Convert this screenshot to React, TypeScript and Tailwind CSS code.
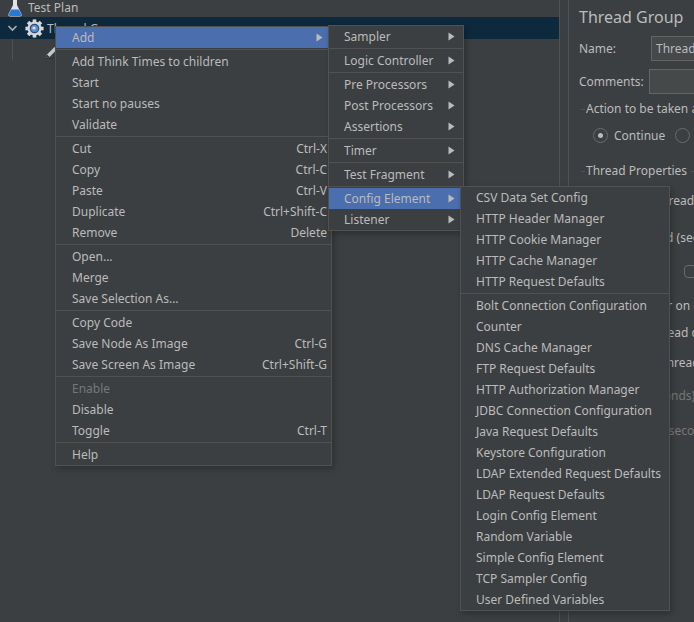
import React from 'react';

type MenuItem = { label: string; shortcut?: string; arrow?: boolean; active?: boolean; disabled?: boolean };

const mainMenu: MenuItem[][] = [
  [{ label: 'Add', arrow: true, active: true }],
  [
    { label: 'Add Think Times to children' },
    { label: 'Start' },
    { label: 'Start no pauses' },
    { label: 'Validate' },
  ],
  [
    { label: 'Cut', shortcut: 'Ctrl-X' },
    { label: 'Copy', shortcut: 'Ctrl-C' },
    { label: 'Paste', shortcut: 'Ctrl-V' },
    { label: 'Duplicate', shortcut: 'Ctrl+Shift-C' },
    { label: 'Remove', shortcut: 'Delete' },
  ],
  [{ label: 'Open...' }, { label: 'Merge' }, { label: 'Save Selection As...' }],
  [
    { label: 'Copy Code' },
    { label: 'Save Node As Image', shortcut: 'Ctrl-G' },
    { label: 'Save Screen As Image', shortcut: 'Ctrl+Shift-G' },
  ],
  [{ label: 'Enable', disabled: true }, { label: 'Disable' }, { label: 'Toggle', shortcut: 'Ctrl-T' }],
  [{ label: 'Help' }],
];

const addMenu: MenuItem[][] = [
  [{ label: 'Sampler', arrow: true }],
  [{ label: 'Logic Controller', arrow: true }],
  [
    { label: 'Pre Processors', arrow: true },
    { label: 'Post Processors', arrow: true },
    { label: 'Assertions', arrow: true },
  ],
  [{ label: 'Timer', arrow: true }],
  [{ label: 'Test Fragment', arrow: true }],
  [
    { label: 'Config Element', arrow: true, active: true },
    { label: 'Listener', arrow: true },
  ],
];

const configMenu: MenuItem[][] = [
  [
    { label: 'CSV Data Set Config' },
    { label: 'HTTP Header Manager' },
    { label: 'HTTP Cookie Manager' },
    { label: 'HTTP Cache Manager' },
    { label: 'HTTP Request Defaults' },
  ],
  [
    { label: 'Bolt Connection Configuration' },
    { label: 'Counter' },
    { label: 'DNS Cache Manager' },
    { label: 'FTP Request Defaults' },
    { label: 'HTTP Authorization Manager' },
    { label: 'JDBC Connection Configuration' },
    { label: 'Java Request Defaults' },
    { label: 'Keystore Configuration' },
    { label: 'LDAP Extended Request Defaults' },
    { label: 'LDAP Request Defaults' },
    { label: 'Login Config Element' },
    { label: 'Random Variable' },
    { label: 'Simple Config Element' },
    { label: 'TCP Sampler Config' },
    { label: 'User Defined Variables' },
  ],
];

function Menu({ groups, className, itemPad }: { groups: MenuItem[][]; className: string; itemPad: string }) {
  return (
    <div className={`absolute border border-[#515151] bg-[#3c3f41] shadow-[2px_3px_6px_rgba(0,0,0,0.25)] ${className}`}>
      {groups.map((group, i) => (
        <div key={i}>
          {i > 0 && <div className="my-px h-px bg-[#515151]" />}
          {group.map((item) => (
            <div
              key={item.label}
              className={`flex h-[21px] items-center pr-1 ${itemPad} ${item.active ? 'bg-[#4b6eaf]' : ''} ${item.disabled ? 'text-[#777777]' : 'text-[#bbbbbb]'}`}
            >
              <span className="flex-1 whitespace-nowrap">{item.label}</span>
              {item.shortcut && <span className="whitespace-nowrap">{item.shortcut}</span>}
              {item.arrow && (
                <svg width="7" height="9" viewBox="0 0 7 9" className="mr-1">
                  <path d="M0.5 0.5 L6.5 4.5 L0.5 8.5 Z" fill="#bbbbbb" />
                </svg>
              )}
            </div>
          ))}
        </div>
      ))}
    </div>
  );
}

function Flask() {
  return (
    <svg width="14" height="17" viewBox="0 0 14 17" className="shrink-0">
      <path d="M5 0 H9 V5 L13.5 14 Q14.2 16.5 12 16.5 H2 Q-0.2 16.5 0.5 14 L5 5 Z" fill="#dfe3e8" />
      <path d="M3.2 9.5 H10.8 L13.2 14.2 Q13.7 16 12 16 H2 Q0.3 16 0.8 14.2 Z" fill="#2a78d6" />
    </svg>
  );
}

function Gear() {
  return (
    <svg width="19" height="19" viewBox="0 0 19 19" className="shrink-0">
      <g fill="#d6d8da">
        <circle cx="9.5" cy="9.5" r="7" />
        {[0, 45, 90, 135, 180, 225, 270, 315].map((a) => (
          <rect key={a} x="7.7" y="0.4" width="3.6" height="4" transform={`rotate(${a} 9.5 9.5)`} />
        ))}
      </g>
      <circle cx="9.5" cy="9.5" r="4.8" fill="#2d4f80" />
      <circle cx="9.5" cy="9.5" r="3.6" fill="#5d8fd0" />
      <circle cx="9" cy="9" r="1.6" fill="#cfe0f4" />
    </svg>
  );
}

function Pencil() {
  return (
    <svg width="14" height="14" viewBox="0 0 14 14">
      <path d="M1 13 L2 9.5 L9.5 2 L12 4.5 L4.5 12 Z" fill="#c9c9c9" />
      <path d="M1 13 L2 9.5 L4.5 12 Z" fill="#2b2b2b" />
      <path d="M1 13.5 H8" stroke="#2f3132" strokeWidth="1" />
    </svg>
  );
}

export default function App() {
  return (
    <div className="relative flex h-[622px] w-[694px] overflow-hidden bg-[#3c3f41] font-['Noto_Sans',sans-serif] text-[12px] leading-none text-[#bbbbbb]">
      {/* Tree */}
      <div className="w-[560px] shrink-0 border-r border-[#515151]">
        <div className="flex h-[17px] items-center gap-[6px] pl-[8px]">
          <Flask />
          <span className="pb-px">Test Plan</span>
        </div>
        <div className="flex h-[22px] items-center bg-[#0d293e] pl-[7px]">
          <svg width="11" height="7" viewBox="0 0 11 7" className="mr-[7px] shrink-0">
            <path d="M1.5 1 L5.5 5 L9.5 1" fill="none" stroke="#a9b0b6" strokeWidth="1.6" />
          </svg>
          <Gear />
          <span className="ml-[3px] pt-px">Thread Group</span>
        </div>
        <div className="ml-[12px] h-[21px] border-l border-[#515151] pl-[32px] pt-[6px]">
          <Pencil />
        </div>
      </div>

      {/* Details */}
      <div className="ml-[8px] flex-1 border-l border-[#515151] pl-[10px] pt-[9px]">
        <div className="text-[16px]">Thread Group</div>
        <div className="mt-[11px] flex items-center">
          <span className="w-[72px]">Name:</span>
          <div className="flex h-[25px] w-[200px] shrink-0 items-center border border-[#646464] bg-[#45494a] pl-1">Thread Group</div>
        </div>
        <div className="mt-[8px] flex items-center">
          <span className="w-[70px] whitespace-nowrap">Comments:</span>
          <div className="h-[25px] w-[200px] shrink-0 border border-[#646464] bg-[#45494a]" />
        </div>
        <div className="mt-[9px] ml-[2px] flex items-center whitespace-nowrap">
          <span className="mr-px h-px w-[4px] bg-[#515151]" />
          Action to be taken after a Sampler error
        </div>
        <div className="mt-[13px] ml-[14px] flex items-center whitespace-nowrap">
          <span className="flex h-[15px] w-[15px] items-center justify-center rounded-full border border-[#6b6b6b]">
            <span className="h-[5px] w-[5px] rounded-full bg-[#bbbbbb]" />
          </span>
          <span className="ml-[6px]">Continue</span>
          <span className="ml-[10px] h-[15px] w-[15px] rounded-full border border-[#6b6b6b]" />
        </div>
        <div className="mt-[22px] ml-[2px] flex items-center whitespace-nowrap">
          <span className="mr-px h-px w-[4px] bg-[#515151]" />
          Thread Properties
          <span className="ml-1 h-px w-[100px] bg-[#515151]" />
        </div>
        <div className="mt-[18px] whitespace-nowrap pl-[11px]">Number of Threads (users):</div>
        <div className="mt-[25px] whitespace-nowrap pl-[3px]">Ramp-up period (seconds):</div>
        <div className="mt-[21px] flex items-center pl-[105px]">
          <span className="h-[13px] w-[13px] rounded-sm border border-[#6b6b6b]" />
        </div>
        <div className="mt-[22px] whitespace-nowrap pl-[34px]">Same user on each iteration</div>
        <div className="mt-[15px] whitespace-nowrap pl-[35px]">Delay Thread creation until needed</div>
        <div className="mt-[18px] whitespace-nowrap pl-[38px]">Specify Thread lifetime</div>
        <div className="mt-[21px] whitespace-nowrap pl-[10px] text-[#777777]">Duration (seconds):</div>
        <div className="mt-[23px] whitespace-nowrap pl-[8px] text-[#777777]">Startup delay (seconds):</div>
      </div>

      {/* Popup menus */}
      <Menu groups={mainMenu} itemPad="pl-[16px]" className="left-[55px] top-[26px] w-[277px]" />
      <Menu groups={addMenu} itemPad="pl-[15px]" className="left-[328px] top-[25px] w-[136px]" />
      <Menu groups={configMenu} itemPad="pl-[15px]" className="left-[460px] top-[186px] w-[210px]" />
    </div>
  );
}
